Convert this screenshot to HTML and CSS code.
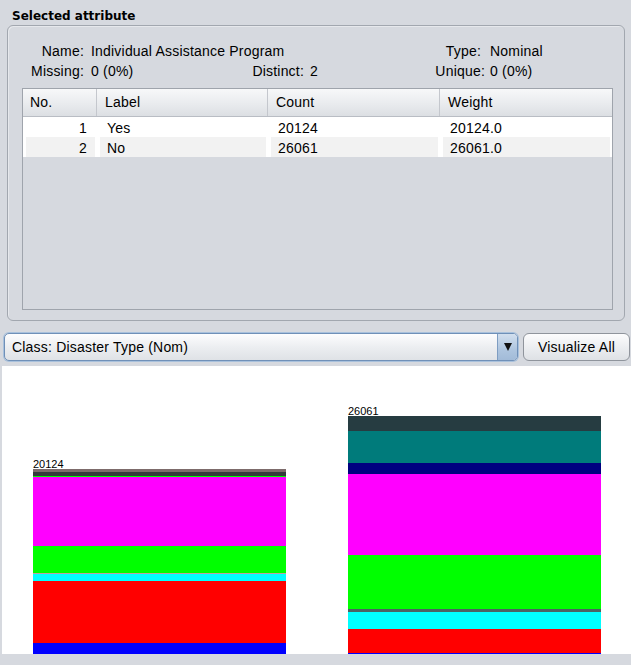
FILE: index.html
```html
<!DOCTYPE html>
<html>
<head>
<meta charset="utf-8">
<link rel="stylesheet" href="styles.css">
</head>
<body>
<div class="title">Selected attribute</div>
<div class="panel">
  <div class="info">
    <span class="lab">Name:</span><span class="val wide">Individual Assistance Program</span>
    <span class="lab type">Type:</span><span class="val v3">Nominal</span>
    <span class="lab">Missing:</span><span class="val">0 (0%)</span>
    <span class="lab">Distinct:</span><span class="val v2">2</span>
    <span class="lab">Unique:</span><span class="val v3">0 (0%)</span>
  </div>
  <div class="table">
    <div class="thead">
      <div class="th first">No.</div>
      <div class="th">Label</div>
      <div class="th">Count</div>
      <div class="th last">Weight</div>
    </div>
    <div class="tr">
      <div class="td num">1</div>
      <div class="td">Yes</div>
      <div class="td">20124</div>
      <div class="td">20124.0</div>
    </div>
    <div class="tr alt">
      <div class="td num">2</div>
      <div class="td">No</div>
      <div class="td">26061</div>
      <div class="td">26061.0</div>
    </div>
  </div>
</div>
<div class="controls">
  <div class="combo">
    <span class="combo-text">Class: Disaster Type (Nom)</span>
    <span class="combo-arrow"><span class="tri"></span></span>
  </div>
  <div class="button">Visualize All</div>
</div>
<div class="plot">
  <div class="bar">
    <div class="bar-label">20124</div>
    <div class="stack">
      <div class="seg" style="height:3px;background:#7d6b6b"></div>
      <div class="seg" style="height:4px;background:#343a3b"></div>
      <div class="seg" style="height:1px;background:#00ff00"></div>
      <div class="seg" style="height:69px;background:#ff00ff"></div>
      <div class="seg" style="height:27px;background:#00ff00"></div>
      <div class="seg" style="height:1px;background:#c0a0a0"></div>
      <div class="seg" style="height:7px;background:#00ffff"></div>
      <div class="seg" style="height:62px;background:#ff0000"></div>
      <div class="seg" style="height:11px;background:#0000ff"></div>
    </div>
  </div>
  <div class="bar">
    <div class="bar-label">26061</div>
    <div class="stack">
      <div class="seg" style="height:15px;background:#263c41"></div>
      <div class="seg" style="height:32px;background:#007b7b"></div>
      <div class="seg" style="height:11px;background:#000080"></div>
      <div class="seg" style="height:81px;background:#ff00ff"></div>
      <div class="seg" style="height:54px;background:#00ff00"></div>
      <div class="seg" style="height:3px;background:#4c6262"></div>
      <div class="seg" style="height:17px;background:#00ffff"></div>
      <div class="seg" style="height:24px;background:#ff0000"></div>
      <div class="seg" style="height:1px;background:#0000ff"></div>
    </div>
  </div>
</div>
</body>
</html>
```
FILE: styles.css
```css
* { box-sizing: border-box; }
html, body {
  margin: 0;
  padding: 0;
  background: #d6d9df;
  font-family: "Liberation Sans", Arial, sans-serif;
  font-size: 14px;
  letter-spacing: 0.2px;
  color: #000;
  width: 631px;
  height: 665px;
  overflow: hidden;
}
.title {
  height: 25px;
  padding: 8px 0 0 12px;
  font-family: "DejaVu Sans", sans-serif;
  font-size: 12px;
  font-weight: bold;
  line-height: 16px;
  letter-spacing: 0;
}
.panel {
  margin-left: 7px;
  width: 618px;
  height: 296px;
  border: 1px solid #a2a7af;
  border-radius: 6px;
  box-shadow: inset 1px 1px 0 #e6e8ec;
  padding: 15px 11px 0 14px;
}
.info {
  display: grid;
  grid-template-columns: 76px 166px 54px 126px 55px 1fr;
  margin-left: -14px;
  line-height: 20px;
  height: 40px;
  white-space: nowrap;
}
.info .lab { text-align: right; }
.info .type { padding-right: 4px; }
.info .val { padding-left: 7px; }
.info .val.v2 { padding-left: 6px; }
.info .val.v3 { padding-left: 5px; }
.info .wide { grid-column: span 3; }
.table {
  margin-top: 7px;
  height: 222px;
  border: 1px solid #9fa4ac;
  background: #d6d9df;
}
.thead, .tr {
  display: grid;
  grid-template-columns: 74px 171px 172px 1fr;
}
.thead {
  height: 28px;
  line-height: 27px;
  background: linear-gradient(#f7f8f9, #e9ebee 55%, #dcdfe3);
  border-bottom: 1px solid #b9bdc4;
}
.th {
  padding-left: 8px;
  border-right: 1px solid #c4c7cd;
}
.th.first { padding-left: 7px; }
.th.last { border-right: none; }
.tr {
  height: 20px;
  line-height: 22px;
  background: #fff;
}
.td {
  border-left: 3px solid #fff;
  border-right: 2px solid #fff;
  padding-left: 7px;
  overflow: hidden;
  white-space: nowrap;
}
.td.num {
  text-align: right;
  padding-left: 0;
  padding-right: 8px;
}
.tr.alt .td { background: #f2f2f2; }
.controls {
  display: flex;
  gap: 5px;
  margin: 12px 1px 0 4px;
  height: 28px;
}
.combo {
  flex: 1;
  display: flex;
  border: 1px solid #6f90b8;
  border-radius: 5px;
  box-shadow: 0 0 0 1px #a9c1dc;
  background: linear-gradient(#fdfdfe, #eceef1 50%, #dfe2e6);
  overflow: hidden;
}
.combo-text {
  flex: 1;
  padding-left: 7px;
  line-height: 27px;
}
.combo-arrow {
  width: 20px;
  border-left: 1px solid #7e9dc2;
  background: linear-gradient(#d2dfee, #aec5df 60%, #a2bbd8);
  display: flex;
  align-items: center;
  justify-content: center;
}
.tri {
  width: 0;
  height: 0;
  border-left: 4px solid transparent;
  border-right: 4px solid transparent;
  border-top: 8px solid #111;
}
.button {
  width: 107px;
  border: 1px solid #8f949c;
  border-radius: 6px;
  background: linear-gradient(#fcfcfd, #eceef1 50%, #dee1e5);
  text-align: center;
  line-height: 27px;
}
.plot {
  margin: 5px 0 0 2px;
  height: 288px;
  background: #fff;
  display: flex;
  align-items: flex-end;
  gap: 62px;
  padding-left: 31px;
}
.bar {
  width: 253px;
  display: flex;
  flex-direction: column;
}
.bar-label {
  font-size: 11px;
  line-height: 10px;
  height: 10px;
  letter-spacing: 0;
}
.stack { display: flex; flex-direction: column; }
.seg { width: 100%; }
```
